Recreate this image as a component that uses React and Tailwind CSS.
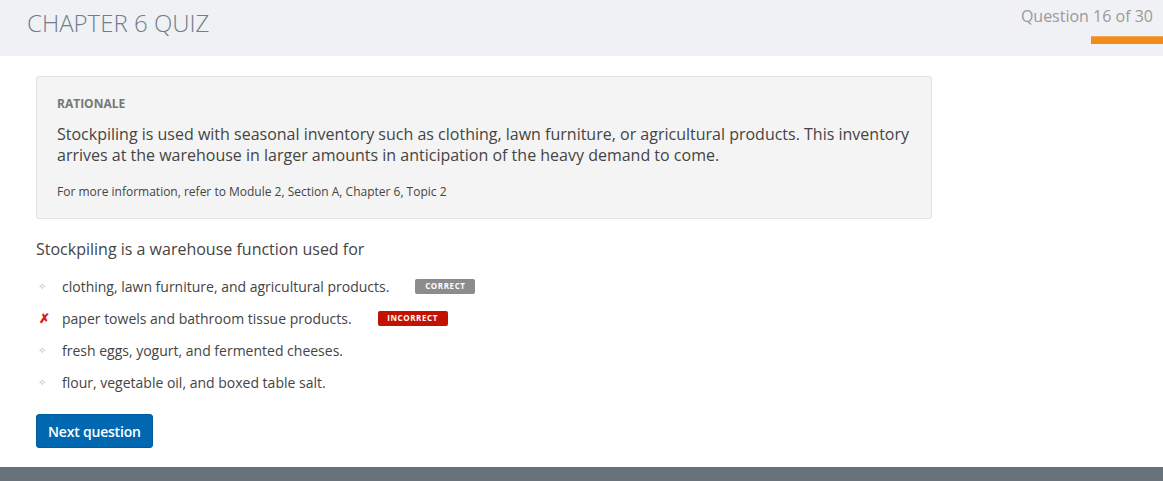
import React from "react";

const font = { fontFamily: '"Open Sans", "Noto Sans", sans-serif' };

function Bullet({ wrong }) {
  if (wrong)
    return (
      <span className="w-[26px] shrink-0 pl-[3px] text-[13px] font-bold text-[#e0141e] leading-none">✗</span>
    );
  return (
    <span className="w-[26px] shrink-0 pl-[2px] text-[10px] text-[#bdbdbd] leading-none">✧</span>
  );
}

function Option({ text, wrong, badge }) {
  return (
    <div className="flex items-center h-[32px]">
      <Bullet wrong={wrong} />
      <span className="text-[14px] text-[#444]">{text}</span>
      {badge === "correct" && (
        <span className="ml-[26px] inline-flex items-center justify-center h-[15px] w-[60px] rounded-[2px] bg-[#8c8c8c] text-white text-[8px] font-bold tracking-[0.6px]">
          CORRECT
        </span>
      )}
      {badge === "incorrect" && (
        <span className="ml-[26px] inline-flex items-center justify-center h-[15px] w-[70px] rounded-[2px] bg-[#c41200] text-white text-[8px] font-bold tracking-[0.6px]">
          INCORRECT
        </span>
      )}
    </div>
  );
}

export default function App() {
  return (
    <div className="w-[1163px] h-[481px] bg-white flex flex-col overflow-hidden" style={font}>
      <div className="h-[56px] bg-[#eff1f4] flex justify-between shrink-0">
        <div className="pl-[27px] pt-[5px] text-[24px] font-light text-[#6f7d8c]">
          CHAPTER 6 QUIZ
        </div>
        <div className="flex flex-col items-end pt-[4px]">
          <div className="pr-[10px] text-[16px] text-[#9a9a9a]">Question 16 of 30</div>
          <div className="mt-[8px] w-[72px] h-[8px] bg-[#f28c1c] border-t border-[#f6a955]" />
        </div>
      </div>

      <div className="flex-1 pl-[36px] pt-[20px]">
        <div className="w-[896px] h-[143px] bg-[#f4f4f4] border border-[#e2e2e2] rounded-[3px] pl-[20px] pr-[20px] pt-[18px]">
          <div className="text-[12px] font-bold text-[#777]">RATIONALE</div>
          <p className="mt-[11px] text-[16px] leading-[21px] text-[#444]">
            Stockpiling is used with seasonal inventory such as clothing, lawn furniture, or agricultural products. This inventory arrives at the warehouse in larger amounts in anticipation of the heavy demand to come.
          </p>
          <p className="mt-[17px] text-[12px] text-[#444]">
            For more information, refer to Module 2, Section A, Chapter 6, Topic 2
          </p>
        </div>

        <div className="mt-[18px] text-[16px] text-[#444]">Stockpiling is a warehouse function used for</div>

        <div className="mt-[9px] flex flex-col">
          <Option text="clothing, lawn furniture, and agricultural products." badge="correct" />
          <Option text="paper towels and bathroom tissue products." wrong badge="incorrect" />
          <Option text="fresh eggs, yogurt, and fermented cheeses." />
          <Option text="flour, vegetable oil, and boxed table salt." />
        </div>

        <button className="mt-[16px] h-[34px] px-[11px] bg-[#0067b1] border border-[#005a9c] rounded-[3px] text-white text-[14px] font-semibold tracking-[-0.2px]">
          Next question
        </button>
      </div>

      <div className="h-[14px] bg-[#67727b] shrink-0" />
    </div>
  );
}
